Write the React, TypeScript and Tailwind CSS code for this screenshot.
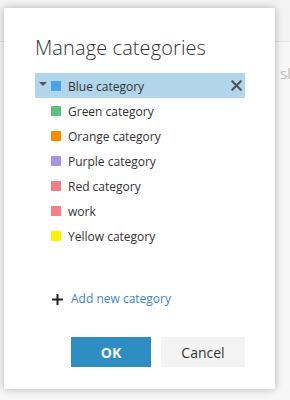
import { X } from 'lucide-react'

const categorias = [
  { nome: 'Blue category', cor: 'bg-[#4aa3e6]', ativa: true },
  { nome: 'Green category', cor: 'bg-[#5fbf7f]' },
  { nome: 'Orange category', cor: 'bg-[#ff8c00]' },
  { nome: 'Purple category', cor: 'bg-[#a895e2]' },
  { nome: 'Red category', cor: 'bg-[#f07f88]' },
  { nome: 'work', cor: 'bg-[#f07f88]' },
  { nome: 'Yellow category', cor: 'bg-[#fff100]' },
]

export default function App() {
  return (
    <div
      className="relative w-[290px] h-[400px] overflow-hidden bg-[#f7f7f7]"
      style={{ fontFamily: '"Open Sans", "Noto Sans", sans-serif' }}
    >
      {/* fundo da página por trás do diálogo */}
      <div className="absolute inset-0">
        <div className="h-[42px] bg-[#f4f4f4] border-b border-[#e2e2e2]" />
        <div className="absolute left-[280px] top-[62px] text-[15px] text-[#bbb]">sl</div>
      </div>

      {/* Diálogo */}
      <div className="absolute left-[4px] top-[8px] w-[271px] h-[381px] bg-white shadow-[0_0_8px_rgba(0,0,0,0.28)] flex flex-col">
        <h1 className="ml-[31px] mt-[26px] text-[20px] font-light text-[#333] leading-[28px] tracking-[0.1px]">
          Manage categories
        </h1>

        <ul className="mt-[11px] ml-[31px] w-[210px]">
          {categorias.map((c) => (
            <li
              key={c.nome}
              className={`h-[25px] flex items-center text-[12px] text-[#333] ${
                c.ativa ? 'bg-[#b1d5ea]' : ''
              }`}
            >
              <span className="w-[16px] flex justify-center">
                {c.ativa && (
                  <span className="block w-0 h-0 border-l-[4px] border-r-[4px] border-t-[4px] border-l-transparent border-r-transparent border-t-[#555] -mt-[3px]" />
                )}
              </span>
              <span className={`w-[10px] h-[10px] ${c.cor}`} />
              <span className="ml-[7px] flex-1 pt-[2px]">{c.nome}</span>
              {c.ativa && <X size={17} strokeWidth={3} className="text-[#555] mr-0" />}
            </li>
          ))}
        </ul>

        <button
          type="button"
          className="mt-[42px] ml-[48px] flex items-center gap-[8px] text-[12px] text-[#3a87c8] w-fit"
        >
          <svg width="11" height="11" viewBox="0 0 11 11" aria-hidden="true">
            <path d="M5.5 0v11M0 5.5h11" stroke="#222" strokeWidth="2" />
          </svg>
          Add new category
        </button>

        <div className="mt-[29px] ml-[67px] flex gap-[10px]">
          <button
            type="button"
            className="w-[80px] h-[30px] bg-[#2e8ec4] text-white font-bold text-[14px]"
          >
            OK
          </button>
          <button
            type="button"
            className="w-[84px] h-[30px] bg-[#f3f3f3] text-[#333] text-[14px]"
          >
            Cancel
          </button>
        </div>
      </div>
    </div>
  )
}
